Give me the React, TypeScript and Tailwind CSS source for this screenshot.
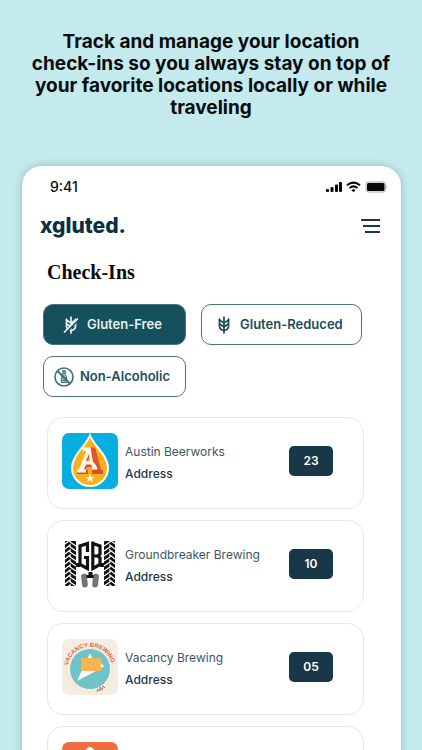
import type { ReactNode } from "react";

function WheatIcon({ crossed = false }: { crossed?: boolean }) {
  return (
    <svg
      viewBox="0 0 16 18"
      className="h-[18px] w-4 shrink-0"
      fill="none"
      stroke="currentColor"
      strokeWidth="1.700"
      strokeLinecap="round"
      strokeLinejoin="round"
      aria-hidden
    >
      <path d="M8 1v16" />
      <path d="M3.500 3v7.500c0 2.500 2 3.500 4.500 4 2.500-.5 4.500-1.500 4.500-4V3" />
      <path d="M3.500 4c1 1.500 3 1.500 4.500 3 1.500-1.500 3.500-1.500 4.500-3M3.500 7.800c1 1.500 3 1.500 4.500 3 1.500-1.500 3.500-1.500 4.500-3" />
      {crossed && (
        <>
          <path d="M14 5 3 17" stroke="#15505c" strokeWidth="2" />
          <path d="M14.500 3 1.500 16" />
        </>
      )}
    </svg>
  );
}

function NoBottleIcon() {
  return (
    <svg viewBox="0 0 20 20" className="size-5 shrink-0" fill="none" stroke="#3f6f7a" aria-hidden>
      <circle cx="10" cy="10" r="9" strokeWidth="1.600" />
      <path d="M8.800 3.500h2.400v3.500c0 1.200 1.500 1.700 1.500 3.500v5H7.300v-5c0-1.800 1.500-2.300 1.500-3.500z" fill="#9fb8be" strokeWidth="1" />
      <path d="M9 5.500h2.500M8 11h5M8 13.500h5" strokeWidth=".8" />
      <path d="m3.500 4 12.500 12.500" strokeWidth="1.800" />
    </svg>
  );
}

function AustinLogo() {
  return (
    <svg viewBox="0 0 56 56" className="size-14 shrink-0" role="img" aria-label="Austin Beerworks logo">
      <rect width="56" height="56" rx="7" fill="#08aee0" />
      <path
        d="M28 2.500C24 13 10 22 10 35a18 18 0 0 0 36 0C46 22 32 13 28 2.500Z"
        fill="#f9b020"
        stroke="#fffdf2"
        strokeWidth="2"
      />
      <path
        fillRule="evenodd"
        d="M22 15h11l6 22h2v4H30v-4h2l-1-3h-6l-1 3h2v4h-11v-3l3-1 6-18h-2ZM28 22l-3 8h5Z"
        fill="#d9502d"
      />
      <path
        fillRule="evenodd"
        d="M21 14.500h8l5 18c2 0 3 3 1 4h-4l-2-5h-5l-2 5h2v3h-9v-3h2l7-18h-3ZM27 21l-3 7h4Z"
        fill="#fff8eb"
      />
      <path d="M28.500 14.500H33L39 37h-3l-2-5-3-3Z" fill="#e35331" />
      <path d="m28 41 1.200 3h3.300l-2.600 2 1 3.200-2.900-1.900-2.900 1.900 1-3.200-2.600-2h3.300Z" fill="#fff8eb" />
    </svg>
  );
}

const treads = [6, 11, 16, 21, 26, 31, 36, 41, 46, 51];

function GroundbreakerLogo() {
  return (
    <svg viewBox="0 0 56 56" className="size-14 shrink-0" role="img" aria-label="Groundbreaker Brewing logo">
      <path d="M13 27h5v4h-5zM38 27h5v4h-5z" fill="#111" />
      <rect x="3" y="5" width="11" height="45" rx="1" fill="#111" />
      <rect x="42" y="5" width="11" height="45" rx="1" fill="#111" />
      <g fill="none" stroke="#fff" strokeWidth="1.300">
        {treads.map((y) => (
          <path key={y} d={`m3 ${y + 2} 5-4 0 2 6 4M53 ${y + 2}l-5-4 0 2-6 4`} />
        ))}
      </g>
      <g fill="none" stroke="#111" strokeWidth="3.200">
        <path d="M25.500 16V7.500L18 10v18.500l7.500 4V21.500h-3.500" />
        <path d="M30.800 5.500V32.500l7.200-4V22l-2-2 2-2v-8l-7.200-2.500M30.500 20H36" />
      </g>
      <path d="M26.500 36h4v3h3v3h-10v-3h3z" fill="#111" />
      <g fill="#777" stroke="#444" strokeWidth=".5">
        <rect x="20" y="38" width="5" height="13" rx="2" transform="rotate(-6 23 45)" />
        <rect x="31" y="38" width="5" height="13" rx="2" transform="rotate(6 33 45)" />
      </g>
    </svg>
  );
}

function VacancyLogo() {
  return (
    <svg viewBox="0 0 56 56" className="size-14 shrink-0" role="img" aria-label="Vacancy Brewing logo">
      <rect width="56" height="56" rx="7" fill="#f4ede1" />
      <circle cx="28" cy="30" r="23.500" fill="none" stroke="#f5dfb4" strokeWidth=".7" />
      <circle cx="28" cy="30" r="20" fill="#6fc3c8" />
      <path d="m28 14 3 7h-6zM38 23l4 4-4 3zM20 31 15 42l19-10z" fill="#fffaf0" />
      <rect x="19" y="19" width="20" height="13" rx="1" fill="#f8b452" />
      <path id="vacancy-arc" d="M6 26.500a22.300 22.300 0 0 1 44 0" fill="none" />
      <text fill="#df6244" fontSize="6" fontWeight="700" fontFamily="Liberation Sans, sans-serif">
        <textPath href="#vacancy-arc">VACANCY BREWING</textPath>
      </text>
      <path d="m35 53 1-3 2 2 0-4 2 3 1-4 2 2" fill="none" stroke="#df6244" strokeWidth="1" />
    </svg>
  );
}

function OrangeLogo() {
  return (
    <svg viewBox="0 0 56 56" className="size-14 shrink-0" aria-hidden>
      <rect width="56" height="56" rx="7" fill="#f06d42" />
      <path d="M28 5c-3 0-4 4-10 8v30h20V13c-6-4-7-8-10-8Z" fill="#fff" />
    </svg>
  );
}

function StatusBar() {
  return (
    <div className="flex items-center justify-between pr-[13px] pl-7 text-[#090909]">
      <span className="text-[14px] leading-4 font-medium">9:41</span>
      <svg viewBox="0 0 62 12" className="h-3 w-[62px]" fill="currentColor" aria-label="Signal, Wi-Fi and battery">
        <rect x="0" y="8" width="3" height="3" rx="1" />
        <rect x="4.500" y="6" width="3" height="5" rx="1" />
        <rect x="9" y="3.500" width="3" height="7.500" rx="1" />
        <rect x="13" y="1" width="3" height="10" rx="1" />
        <g fill="none" stroke="currentColor" strokeWidth="2">
          <path d="M21 4.200q6.500-5.200 13 0M23.500 7q4-3.200 8 0" />
        </g>
        <path d="m25.300 9 2.200 2.200L29.700 9q-2.200-1.700-4.400 0Z" />
        <rect x="40" y="1" width="19.500" height="10" rx="2.500" fill="none" stroke="#aaa" />
        <rect x="41" y="2" width="17.500" height="8" rx="1.500" />
        <path d="M60.500 4.500q1.500 1.500 0 3z" fill="#aaa" />
      </svg>
    </div>
  );
}

type FilterProps = { label: string; icon: ReactNode; className: string };

function FilterButton({ label, icon, className }: FilterProps) {
  return (
    <button
      type="button"
      className={`flex h-[41px] items-center rounded-[10px] border border-[#477680] text-[13px] font-semibold ${className}`}
    >
      {icon}
      {label}
    </button>
  );
}

const places = [
  { name: "Austin Beerworks", count: "23", logo: <AustinLogo /> },
  { name: "Groundbreaker Brewing", count: "10", logo: <GroundbreakerLogo /> },
  { name: "Vacancy Brewing", count: "05", logo: <VacancyLogo /> },
  { name: "", count: "", logo: <OrangeLogo /> },
];

export default function App() {
  return (
    <main className="flex h-screen flex-col overflow-hidden bg-[#c5eaed] font-['Inter',sans-serif]">
      <h1 className="px-6 pt-[31px] text-center text-[19px] leading-[22px] font-bold text-[#080c0d]">
        Track and manage your location
        <br />
        check-ins so you always stay on top of
        <br />
        your favorite locations locally or while
        <br />
        traveling
      </h1>

      <section className="mr-[21px] ml-[22px] mt-[47px] grow rounded-t-[20px] bg-white pt-[13px] shadow-[0_0_8px_rgba(50,110,120,0.35)]">
        <StatusBar />

        <header className="mt-[15px] flex h-8 items-center justify-between pr-[21px] pl-[18px]">
          <a href="#" className="text-[21px] leading-8 font-extrabold text-[#082f43]">
            xgluted.
          </a>
          <button type="button" aria-label="Menu" className="flex h-4 flex-col items-end justify-between py-px">
            <span className="h-[2px] w-[19px] bg-[#17394b]" />
            <span className="h-[2px] w-[17px] bg-[#17394b]" />
            <span className="h-[2px] w-[15px] bg-[#17394b]" />
          </button>
        </header>

        <h2 className="mt-4 pl-[25px] font-['Liberation_Serif',serif] text-[20px] leading-7 font-bold text-[#0a0a0a]">
          Check-Ins
        </h2>

        <div className="mt-[18px] flex flex-wrap gap-x-[15px] gap-y-[11px] px-[21px]">
          <FilterButton
            label="Gluten-Free"
            icon={<WheatIcon crossed />}
            className="w-[143px] gap-2 bg-[#15505c] pl-[19px] text-[#e6f1f2]"
          />
          <FilterButton label="Gluten-Reduced" icon={<WheatIcon />} className="w-[161px] gap-2 pl-[14px] text-[#1d4d59]" />
          <FilterButton label="Non-Alcoholic" icon={<NoBottleIcon />} className="w-[143px] gap-[6px] pl-[10px] text-[#1d4d59]" />
        </div>

        <ul className="mt-5 flex flex-col gap-[11px] pr-[37px] pl-[25px]">
          {places.map((place, i) => (
            <li key={i} className="flex h-[92px] items-start rounded-2xl border border-[#e6e8e9] pt-[15px] pr-[30px] pl-[14px]">
              {place.logo}
              {place.name && (
                <>
                  <div className="ml-[7px] grow pt-2 text-[12px] text-[#213a4a]">
                    <h3 className="leading-[22px] text-[#405665]">{place.name}</h3>
                    <p className="leading-[22px] font-medium">Address</p>
                  </div>
                  <span className="mt-[13px] flex h-[30px] w-[44px] items-center justify-center rounded-[5px] bg-[#183747] text-[12px] font-semibold text-white">
                    {place.count}
                  </span>
                </>
              )}
            </li>
          ))}
        </ul>
      </section>
    </main>
  );
}
